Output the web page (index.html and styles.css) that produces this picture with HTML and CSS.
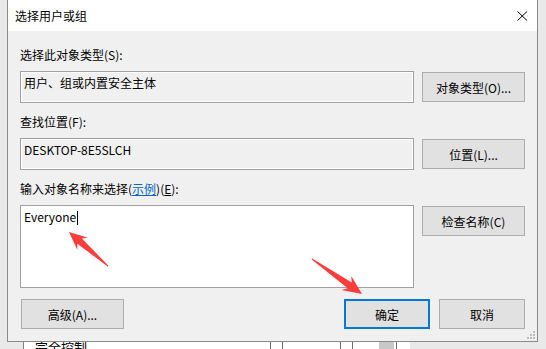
FILE: index.html
```html
<!DOCTYPE html>
<html lang="zh-CN">
<head>
    <meta charset="UTF-8">
    <meta name="viewport" content="width=device-width, initial-scale=1.0">
    <title>选择用户或组</title>
    <link rel="stylesheet" href="styles.css">
</head>
<body>
    <div class="desktop">
        <div class="dialog">
            <div class="titlebar">
                <span class="title">选择用户或组</span>
                <svg class="close" width="11" height="10" viewBox="0 0 11 10">
                    <path d="M0.5 0.5L10 9.5M10 0.5L0.5 9.5" stroke="#000" stroke-width="1" fill="none"/>
                </svg>
            </div>

            <div class="content">
                <div class="label">选择此对象类型(S):</div>
                <div class="row">
                    <div class="field">用户、组或内置安全主体</div>
                    <button type="button" class="btn">对象类型(O)...</button>
                </div>

                <div class="label">查找位置(F):</div>
                <div class="row">
                    <div class="field">DESKTOP-8E5SLCH</div>
                    <button type="button" class="btn">位置(L)...</button>
                </div>

                <div class="label">输入对象名称来选择(<a class="link">示例</a>)(<u>E</u>):</div>
                <div class="row">
                    <div class="field editable">Everyone<span class="caret"></span></div>
                    <button type="button" class="btn">检查名称(C)</button>
                </div>

                <div class="actions">
                    <button type="button" class="btn">高级(A)...</button>
                    <span class="spacer"></span>
                    <button type="button" class="btn btn-default">确定</button>
                    <button type="button" class="btn btn-small">取消</button>
                </div>
            </div>

            <svg class="grip" width="9" height="9" viewBox="0 0 9 9">
                <rect x="7" y="1" width="2" height="2" fill="#bcbcbc"/>
                <rect x="4" y="4" width="2" height="2" fill="#bcbcbc"/>
                <rect x="7" y="4" width="2" height="2" fill="#bcbcbc"/>
                <rect x="1" y="7" width="2" height="2" fill="#bcbcbc"/>
                <rect x="4" y="7" width="2" height="2" fill="#bcbcbc"/>
                <rect x="7" y="7" width="2" height="2" fill="#bcbcbc"/>
            </svg>
        </div>

        <div class="behind">
            <div class="perm-list">
                <span class="perm-name">完全控制</span>
                <span class="col col-a"></span>
                <span class="col col-b"></span>
                <span class="col col-c"></span>
                <span class="col col-d"></span>
                <span class="thumb"></span>
                <span class="col col-e"></span>
            </div>
        </div>

        <!-- annotation arrows drawn over the screenshot -->
        <svg class="marks" width="546" height="349" viewBox="0 0 546 349">
            <polygon points="69,232 87.9,237.8 81.9,238.6 108.3,265.6 107.7,266.4 77.3,243.8 77.3,249.8" fill="#fb3c3c"/>
            <polygon points="362,294 351.3,276.1 351.7,282.5 312.3,258.6 311.7,259.4 347.7,288.3 341.5,290.1" fill="#fb3c3c"/>
        </svg>
    </div>
</body>
</html>
```

FILE: styles.css
```css
* {
    box-sizing: border-box;
}

body {
    margin: 0;
    font-family: "Noto Sans CJK SC", "Microsoft YaHei", sans-serif;
    font-size: 12px;
    color: #000000;
}

.desktop {
    position: relative;
    width: 546px;
    height: 349px;
    overflow: hidden;
    background-color: #e9e9e9;
}

.dialog {
    position: relative;
    margin-left: 7px;
    width: 531px;
    height: 342px;
    border: 1px solid #8a8a8a;
    border-top: none;
    background-color: #f0f0f0;
    display: flex;
    flex-direction: column;
}

.titlebar {
    height: 31px;
    flex: none;
    background-color: #ffffff;
    display: flex;
    align-items: center;
    justify-content: space-between;
    padding: 0 9px 0 7px;
}

.title {
    line-height: 16px;
}

.content {
    padding: 16px 12px 0 12px;
    display: flex;
    flex-direction: column;
}

.label {
    line-height: 16px;
    margin-bottom: 8px;
}

.link {
    color: #0066cc;
    text-decoration: underline;
}

.row {
    display: flex;
    gap: 8px;
    align-items: flex-start;
    margin-bottom: 11px;
}

.field {
    width: 394px;
    height: 32px;
    flex: none;
    border: 1px solid #a0a0a0;
    box-shadow: inset 0 0 0 1px #ffffff;
    background-color: #f0f0f0;
    padding: 3px 3px;
    line-height: 16px;
}

.field.editable {
    height: 83px;
    background-color: #ffffff;
    box-shadow: none;
    padding: 3px 3px;
}

.caret {
    display: inline-block;
    width: 1px;
    height: 14px;
    margin-left: 1px;
    background-color: #000000;
    vertical-align: -3px;
}

.btn {
    width: 103px;
    height: 30px;
    margin-top: 1px;
    flex: none;
    padding: 0;
    font-family: inherit;
    font-size: 12px;
    color: #000000;
    background-color: #e1e1e1;
    border: 1px solid #adadad;
}

.actions {
    display: flex;
    gap: 9px;
    margin-top: 0;
}

.actions .btn {
    margin-top: 0;
}

.actions .btn:first-child {
    margin-left: 1px;
}

.spacer {
    flex: 1;
}

.btn-default,
.btn-small {
    width: 86px;
}

.btn-default {
    border: 2px solid #0078d7;
}

.grip {
    position: absolute;
    right: 2px;
    bottom: 2px;
}

.behind {
    height: 7px;
    padding-left: 23px;
    display: flex;
}

.perm-list {
    position: relative;
    width: 387px;
    height: 7px;
    background-color: #ffffff;
    border-left: 1px solid #828282;
    overflow: hidden;
}

.perm-name {
    position: absolute;
    left: 11px;
    top: -3px;
    line-height: 16px;
    font-size: 13px;
}

.col {
    position: absolute;
    top: 0;
    bottom: 0;
    width: 1px;
    background-color: #6e6e6e;
}

.col-a { left: 246px; }
.col-b { left: 258px; }
.col-c { left: 316px; }
.col-d { left: 328px; }
.col-e { left: 372px; }

.thumb {
    position: absolute;
    left: 355px;
    top: 0;
    bottom: 0;
    width: 15px;
    background-color: #c8c8c8;
}

.marks {
    position: absolute;
    left: 0;
    top: 0;
    pointer-events: none;
}
```
